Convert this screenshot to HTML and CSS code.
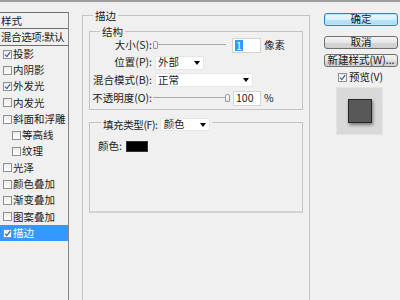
FILE: index.html
```html
<!DOCTYPE html>
<html lang="zh-CN">
<head>
<meta charset="utf-8">
<title>图层样式</title>
<link rel="stylesheet" href="styles.css">
</head>
<body>
<div class="topbar"></div>
<div class="main">
  <div class="styles-panel">
    <div class="sp-head">样式</div>
    <div class="sp-blend">混合选项:默认</div>
    <ul class="sp-list">
      <li class="item"><span class="cb"><svg viewBox="0 0 7 7" width="7" height="7"><path d="M1 3.6 L2.8 5.6 L6.2 1.2" fill="none" stroke="#3b5aa0" stroke-width="1.2"/></svg></span>投影</li>
      <li class="item"><span class="cb"></span>内阴影</li>
      <li class="item"><span class="cb"><svg viewBox="0 0 7 7" width="7" height="7"><path d="M1 3.6 L2.8 5.6 L6.2 1.2" fill="none" stroke="#3b5aa0" stroke-width="1.2"/></svg></span>外发光</li>
      <li class="item"><span class="cb"></span>内发光</li>
      <li class="item"><span class="cb"></span>斜面和浮雕</li>
      <li class="item sub"><span class="cb"></span>等高线</li>
      <li class="item sub"><span class="cb"></span>纹理</li>
      <li class="item"><span class="cb"></span>光泽</li>
      <li class="item"><span class="cb"></span>颜色叠加</li>
      <li class="item"><span class="cb"></span>渐变叠加</li>
      <li class="item"><span class="cb"></span>图案叠加</li>
      <li class="item active"><span class="cb"><svg viewBox="0 0 7 7" width="7" height="7"><path d="M1 3.6 L2.8 5.6 L6.2 1.2" fill="none" stroke="#3b5aa0" stroke-width="1.2"/></svg></span>描边</li>
    </ul>
  </div>

  <div class="center">
    <fieldset class="grp outer">
      <legend>描边</legend>
      <fieldset class="grp struct">
        <legend>结构</legend>
        <div class="row first">
          <span class="lbl">大小(S):</span>
          <div class="slider s1"><span class="thumb"></span></div>
          <div class="num n1"><span class="seltext">1</span></div>
          <span class="unit">像素</span>
        </div>
        <div class="row">
          <span class="lbl">位置(P):</span>
          <div class="dd dd-pos"><span>外部</span><span class="arrow"></span></div>
        </div>
        <div class="row">
          <span class="lbl">混合模式(B):</span>
          <div class="dd dd-blend"><span>正常</span><span class="arrow"></span></div>
        </div>
        <div class="row">
          <span class="lbl">不透明度(O):</span>
          <div class="slider s2"><span class="thumb"></span></div>
          <div class="num n2">100</div>
          <span class="unit">%</span>
        </div>
      </fieldset>
      <fieldset class="grp fill">
        <legend><span class="flbl">填充类型(F):</span><span class="dd dd-fill"><span>颜色</span><span class="arrow"></span></span></legend>
        <div class="color-row">颜色:<span class="swatch"></span></div>
      </fieldset>
    </fieldset>
  </div>

  <div class="right">
    <div class="btn primary">确定</div>
    <div class="btn b2">取消</div>
    <div class="btn b3">新建样式(W)...</div>
    <div class="preview-row"><span class="cb"><svg viewBox="0 0 7 7" width="7" height="7"><path d="M1 3.6 L2.8 5.6 L6.2 1.2" fill="none" stroke="#3b5aa0" stroke-width="1.2"/></svg></span>预览(V)</div>
    <div class="preview-box"><div class="preview-sq"></div></div>
  </div>
</div>
</body>
</html>
```

FILE: styles.css
```css
html, body {
  margin: 0;
  padding: 0;
}
body {
  width: 400px;
  height: 300px;
  overflow: hidden;
  background: #f0f0f0;
  color: #1a1a1a;
  font-family: "Noto Sans CJK SC", "Noto Sans", sans-serif;
  font-size: 10.5px;
  line-height: 1;
}
.topbar {
  height: 2px;
  background: #9c9c9c;
}
.main {
  display: flex;
  height: 298px;
  overflow: hidden;
}

/* left styles list */
.styles-panel {
  flex: none;
  width: 69px;
  box-sizing: border-box;
  margin-top: 10px;
  border-top: 1px solid #707070;
  border-right: 1px solid #858585;
}
.sp-head {
  height: 15px;
  line-height: 15px;
  padding-left: 1px;
  border-bottom: 1px solid #707070;
}
.sp-blend {
  height: 16px;
  line-height: 16px;
  padding-left: 1px;
  border-bottom: 1px solid #707070;
  white-space: nowrap;
  overflow: hidden;
  letter-spacing: -0.4px;
}
.sp-list {
  list-style: none;
  margin: 0;
  padding: 0;
}
.item {
  height: 16.27px;
  display: flex;
  align-items: center;
  padding-left: 3px;
  white-space: nowrap;
}
.item.sub {
  padding-left: 12px;
}
.item.active {
  background: #3399ff;
  color: #fff;
}
.cb {
  flex: none;
  width: 9px;
  height: 9px;
  box-sizing: border-box;
  border: 1px solid #8f8f8f;
  background: linear-gradient(#ececec, #ffffff);
  margin-right: 1px;
  display: inline-flex;
  align-items: center;
  justify-content: center;
}
.cb svg {
  display: block;
}

/* center panel */
.center {
  flex: none;
  width: 228px;
  margin-left: 13px;
  padding-top: 6.5px;
}
.grp {
  margin: 0;
  min-width: 0;
  border: 1px solid #c4c4c4;
}
.outer {
  box-sizing: border-box;
  width: 228px;
  height: 291.5px;
  padding: 4px 6px 0;
  border-bottom: 0;
}
.outer > legend {
  margin-left: 4px;
  padding: 0 2px;
  height: 13px;
  line-height: 13px;
}
.struct {
  padding: 0.5px 0 4px;
}
.struct > legend {
  margin-left: 10px;
  padding: 0 2px;
  height: 12px;
  line-height: 12px;
}
.row {
  display: flex;
  align-items: center;
  height: 14px;
  margin-top: 3.7px;
}
.row.first {
  margin-top: 0;
}
.lbl {
  flex: none;
  width: 62px;
  text-align: right;
  white-space: nowrap;
}
.slider {
  flex: none;
  height: 14px;
  display: flex;
  align-items: center;
  background: linear-gradient(#a9a9a9, #a9a9a9) no-repeat;
  background-size: 100% 1px;
  background-position: 0 6px;
}
.slider.s1 {
  width: 73px;
  margin-left: 1px;
  justify-content: flex-start;
}
.slider.s2 {
  width: 77px;
  margin-left: 1px;
  justify-content: flex-end;
}
.thumb {
  width: 5px;
  height: 8px;
  box-sizing: border-box;
  border: 1px solid #9a9a9a;
  border-radius: 2px 2px 1px 1px;
  background: linear-gradient(#ffffff, #e2e2e2);
}
.num {
  flex: none;
  height: 15px;
  box-sizing: border-box;
  border: 1px solid #d3d3d3;
  background: #fff;
  display: flex;
  align-items: center;
  padding-left: 2px;
}
.num.n1 {
  width: 29px;
  margin-left: 6px;
}
.num.n2 {
  width: 28px;
  margin-left: 3px;
}
.seltext {
  background: #3399ff;
  color: #fff;
  height: 11px;
  line-height: 11px;
  padding: 0 1px;
}
.unit {
  margin-left: 3px;
}
.dd {
  flex: none;
  height: 14px;
  box-sizing: border-box;
  background: #fff;
  border: 1px solid #e6e6e6;
  display: inline-flex;
  align-items: center;
  justify-content: space-between;
  padding: 0 3px 0 2px;
  margin-left: 3px;
}
.dd-pos {
  width: 49px;
}
.dd-blend {
  width: 98px;
}
.arrow {
  width: 0;
  height: 0;
  border-top: 4px solid #000;
  border-left: 3px solid transparent;
  border-right: 3px solid transparent;
}
.fill {
  margin-top: 8px;
  padding: 13px 0 59px 8px;
  border-bottom: 2px solid #d2d2d2;
}
.fill > legend {
  margin-left: 3px;
  padding: 0 2px;
  height: 9px;
  display: flex;
  align-items: flex-start;
  overflow: visible;
}
.flbl {
  height: 13px;
  line-height: 13px;
  white-space: nowrap;
  letter-spacing: -0.4px;
}
.dd-fill {
  width: 50px;
  height: 13px;
  margin-left: 2px;
  padding-left: 3px;
}
.color-row {
  height: 12px;
  display: flex;
  align-items: center;
}
.swatch {
  width: 22px;
  height: 11px;
  box-sizing: border-box;
  background: #000;
  border: 1px solid #333;
  margin-left: 4px;
}

/* right panel */
.right {
  flex: none;
  width: 74px;
  margin-left: 14px;
  padding-top: 11px;
  display: flex;
  flex-direction: column;
}
.btn {
  height: 13px;
  box-sizing: border-box;
  border: 1px solid #707070;
  border-radius: 3px;
  background: linear-gradient(#f4f4f4, #e6e6e6 50%, #d6d6d6 51%, #cfcfcf);
  display: flex;
  align-items: center;
  justify-content: center;
  white-space: nowrap;
}
.btn.primary {
  border-color: #3c7fb1;
  background: linear-gradient(#eaf6fd, #d9f0fc 50%, #bee6fd 51%, #a7d9f5);
  box-shadow: inset 0 0 0 1px #b9e5fb;
}
.btn.b2 {
  margin-top: 10px;
}
.btn.b3 {
  margin-top: 5px;
}
.preview-row {
  margin-top: 5px;
  height: 10px;
  display: flex;
  align-items: center;
  padding-left: 14px;
}
.preview-row .cb {
  margin-right: 2px;
}
.preview-box {
  margin-top: 5px;
  margin-left: 12px;
  width: 47px;
  height: 48px;
  box-sizing: border-box;
  background: #d9d9d9;
  border: 1px solid #e4e4e4;
  padding: 11px 0 0 11px;
}
.preview-sq {
  width: 24px;
  height: 24px;
  box-sizing: border-box;
  background: #585858;
  border: 1px solid #262626;
  box-shadow: 1px 2px 3px rgba(0, 0, 0, 0.45);
}
```
